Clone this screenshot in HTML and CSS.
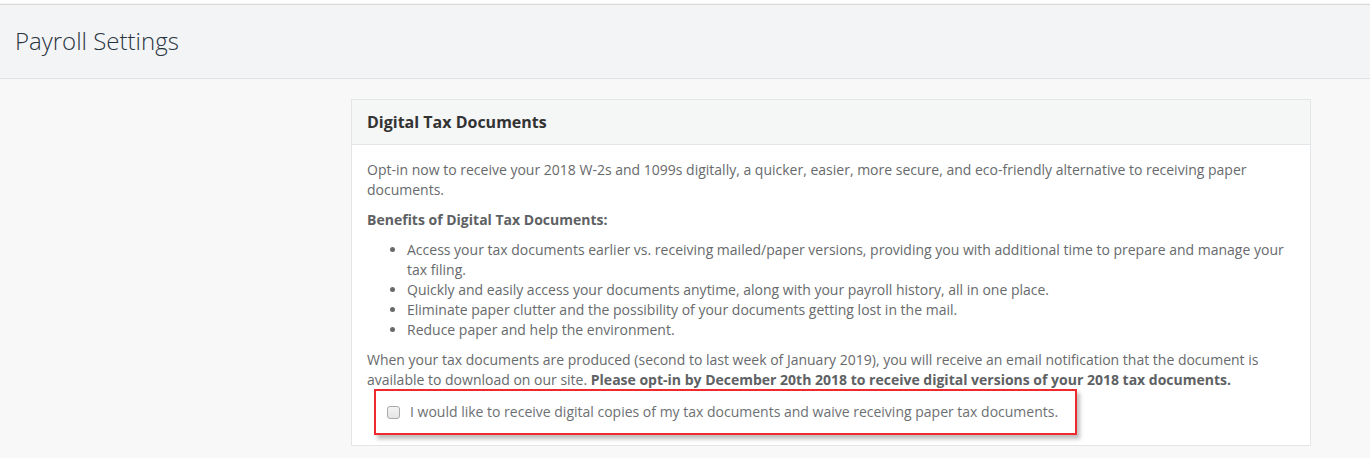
FILE: index.html
```html
<!DOCTYPE html>
<html>
<head>
<meta charset="utf-8">
<title>Payroll Settings</title>
<link rel="stylesheet" href="styles.css">
</head>
<body>
<header class="page-header">
  <h1 class="page-title">Payroll Settings</h1>
</header>
<main class="page-body">
  <section class="panel">
    <div class="panel-heading">Digital Tax Documents</div>
    <div class="panel-body">
      <p>Opt-in now to receive your 2018 W-2s and 1099s digitally, a quicker, easier, more secure, and eco-friendly alternative to receiving paper documents.</p>
      <p><strong>Benefits of Digital Tax Documents:</strong></p>
      <ul class="benefits">
        <li>Access your tax documents earlier vs. receiving mailed/paper versions, providing you with additional time to prepare and manage your tax filing.</li>
        <li>Quickly and easily access your documents anytime, along with your payroll history, all in one place.</li>
        <li>Eliminate paper clutter and the possibility of your documents getting lost in the mail.</li>
        <li>Reduce paper and help the environment.</li>
      </ul>
      <p class="notice">When your tax documents are produced (second to last week of January 2019), you will receive an email notification that the document is available to download on our site. <strong>Please opt-in by December 20th 2018 to receive digital versions of your 2018 tax documents.</strong></p>
      <div class="optin">
        <label class="optin-label"><span class="checkbox"></span>I would like to receive digital copies of my tax documents and waive receiving paper tax documents.</label>
      </div>
    </div>
  </section>
</main>
</body>
</html>
```

FILE: styles.css
```css
* { box-sizing: border-box; }
html, body {
  margin: 0;
  padding: 0;
}
body {
  background: #f8f8f8;
  font-family: "Open Sans", "Liberation Sans", sans-serif;
  font-size: 14px;
  line-height: 20px;
  color: #676a6c;
  padding-top: 4px;
  background-image: linear-gradient(#ffffff, #ffffff);
  background-repeat: no-repeat;
  background-size: 100% 4px;
}
.page-header {
  background: #f3f4f6;
  border-top: 1px solid #d9d9d9;
  border-bottom: 1px solid #e0e3e5;
  box-shadow: 0 -1px 2px rgba(0,0,0,0.06);
  height: 75px;
  display: flex;
  align-items: center;
  padding: 0 15px 2px;
}
.page-title {
  margin: 0;
  font-size: 24px;
  font-weight: 300;
  line-height: 30px;
  color: #2a3440;
}
.page-body {
  display: grid;
  grid-template-columns: 351px 960px;
  padding-top: 20px;
}
.panel {
  grid-column: 2;
  background: #ffffff;
  border: 1px solid #e3e6e8;
}
.panel-heading {
  background: #f5f6f6;
  border-bottom: 1px solid #e3e6e8;
  padding: 12px 15px;
  font-size: 16px;
  font-weight: 700;
  line-height: 20px;
  color: #333;
}
.panel-body {
  padding: 15px 15px 10px;
}
.panel-body p {
  margin: 0 0 10px;
}
.panel-body .notice {
  margin-bottom: 0;
}
.panel-body strong {
  font-weight: 700;
  color: #5e6163;
}
.benefits {
  margin: 0 0 10px;
  padding-left: 40px;
}
.optin {
  margin: -1px 0 0 7px;
  width: 703px;
  height: 46px;
  border: 2px solid #ec2a2f;
  box-shadow: 3px 4px 4px rgba(0,0,0,0.25);
  display: flex;
  align-items: center;
  padding-left: 11px;
}
.optin-label {
  display: flex;
  align-items: center;
  color: #6d7073;
}
.checkbox {
  width: 13px;
  height: 13px;
  border: 1px solid #a9a9a9;
  border-radius: 3px;
  background: linear-gradient(#f4f4f4, #e4e4e4);
  margin-right: 10px;
  flex: none;
}
```
